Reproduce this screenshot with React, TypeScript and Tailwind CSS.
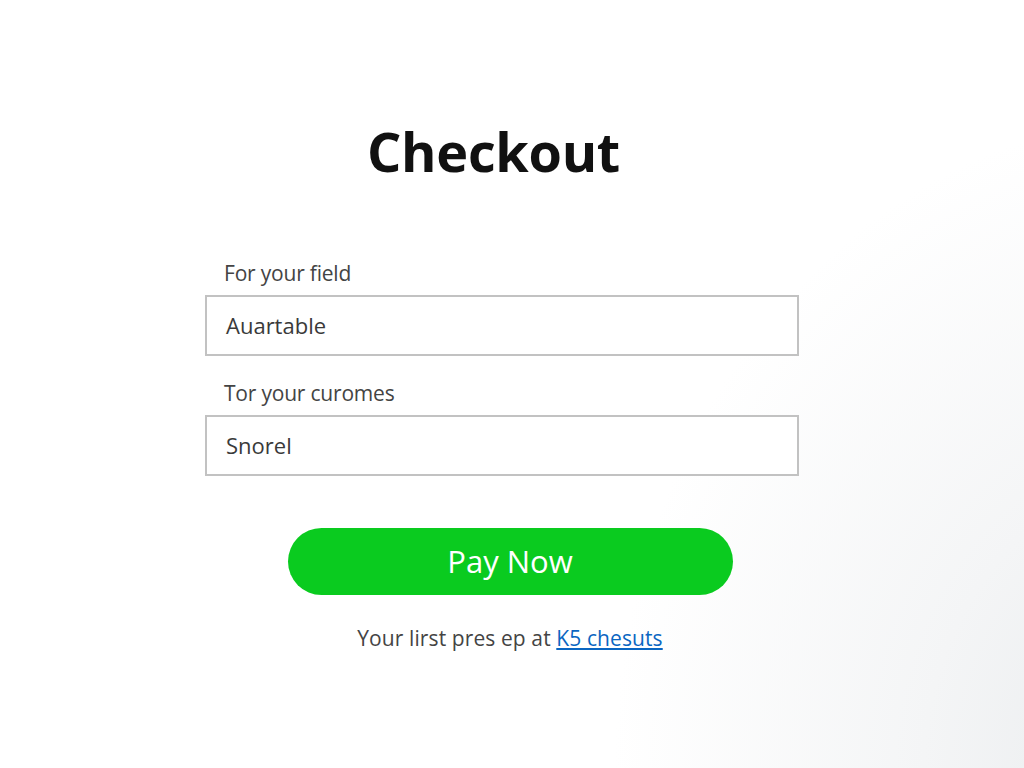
const fieldClass =
  "h-[61px] w-full border-2 border-[#c2c2c2] bg-white px-[19px] flex items-center text-[22px] text-[#3a3a3a]";

const Field: React.FC<{ label: string; value: string }> = ({ label, value }) => (
  <div className="flex flex-col">
    <div className="pl-[19px] text-[21px] leading-[28px] text-[#444] tracking-[-0.2px]">
      {label}
    </div>
    <div className={`mt-[8px] ${fieldClass}`}>{value}</div>
  </div>
);

export default function App() {
  return (
    <div
      className="relative h-[768px] w-full overflow-hidden bg-[radial-gradient(ellipse_55%_85%_at_115%_100%,#e8ebed_0%,#f4f5f6_45%,#ffffff_100%)]"
      style={{ fontFamily: '"Open Sans", "Noto Sans", sans-serif' }}
    >
      <div className="ml-[205px] flex w-[594px] flex-col pt-[115px]">
        <h1 className="pr-[17px] text-center text-[54px] font-bold leading-[72px] tracking-[-0.3px] text-[#111]">
          Checkout
        </h1>
        <div className="mt-[72px] flex flex-col gap-[23px]">
          <Field label="For your field" value="Auartable" />
          <Field label="Tor your curomes" value="Snorel" />
        </div>
        <div className="mt-[52px] flex flex-col items-center pl-[16px]">
          <button className="h-[67px] w-[445px] rounded-full bg-[#0acb1f] text-[31px] text-white">
            Pay Now
          </button>
          <p className="mt-[28px] text-[21px] text-[#444] tracking-[0.1px]">
            Your lirst pres ep at{" "}
            <a href="#" className="text-[#0a66c2] underline">
              K5 chesuts
            </a>
          </p>
        </div>
      </div>
    </div>
  );
}
